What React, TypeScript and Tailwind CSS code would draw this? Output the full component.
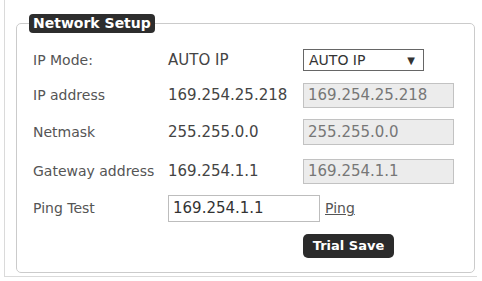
export default function App() {
  const font = { fontFamily: '"DejaVu Sans", Verdana, sans-serif' };
  return (
    <div className="w-[482px] h-[281px] bg-white overflow-hidden" style={font}>
      <div className="ml-[4px] w-[473px] h-[277px] border-l border-b border-[#dadada] pl-[11px] pt-[14px]">
        <fieldset className="w-[459px] h-[259px] border border-[#cbcbcb] rounded-[5px] px-0 pb-0 m-0 min-w-0">
          <legend className="ml-[12px] h-[19px] px-[4px] bg-[#2d2d2d] rounded-[4px] text-white font-bold text-[14px] leading-[19px]">
            Network Setup
          </legend>

          <div className="flex flex-col pl-[16px] text-[14px] text-[#555]">
            <div className="flex items-center h-[24px] mt-[15px]">
              <span className="w-[135px]">IP Mode:</span>
              <span className="w-[135px] text-[15px] text-[#444]">AUTO IP</span>
              <div className="w-[121px] h-[22px] border border-[#666] bg-white flex items-center justify-between pl-[5px] pr-[8px] text-[14px] text-[#333]">
                <span>AUTO IP</span>
                <span className="text-[10px]">▼</span>
              </div>
            </div>

            <div className="flex items-center h-[25px] mt-[11px]">
              <span className="w-[135px]">IP address</span>
              <span className="w-[135px] text-[15px] text-[#444]">169.254.25.218</span>
              <div className="w-[151px] h-[25px] border border-[#c2c2c2] bg-[#ececec] flex items-center pl-[4px] text-[15px] text-[#777]">
                169.254.25.218
              </div>
            </div>

            <div className="flex items-center h-[26px] mt-[11px]">
              <span className="w-[135px]">Netmask</span>
              <span className="w-[135px] text-[15px] text-[#444]">255.255.0.0</span>
              <div className="w-[151px] h-[26px] border border-[#c2c2c2] bg-[#ececec] flex items-center pl-[4px] text-[15px] text-[#777]">
                255.255.0.0
              </div>
            </div>

            <div className="flex items-center h-[25px] mt-[14px]">
              <span className="w-[135px]">Gateway address</span>
              <span className="w-[135px] text-[15px] text-[#444]">169.254.1.1</span>
              <div className="w-[151px] h-[25px] border border-[#c2c2c2] bg-[#ececec] flex items-center pl-[4px] text-[15px] text-[#777]">
                169.254.1.1
              </div>
            </div>

            <div className="flex items-center h-[27px] mt-[11px]">
              <span className="w-[135px]">Ping Test</span>
              <div className="w-[152px] h-[27px] border border-[#bdbdbd] bg-white flex items-center pl-[4px] text-[15px] text-[#333]">
                169.254.1.1
              </div>
              <a href="#" className="ml-[5px] text-[14px] text-[#555] underline">
                Ping
              </a>
            </div>

            <div className="flex mt-[12px] pl-[270px]">
              <button className="w-[91px] h-[24px] bg-[#2b2b2b] rounded-[5px] text-white font-bold text-[13px] leading-[24px]">
                Trial Save
              </button>
            </div>
          </div>
        </fieldset>
      </div>
    </div>
  );
}
